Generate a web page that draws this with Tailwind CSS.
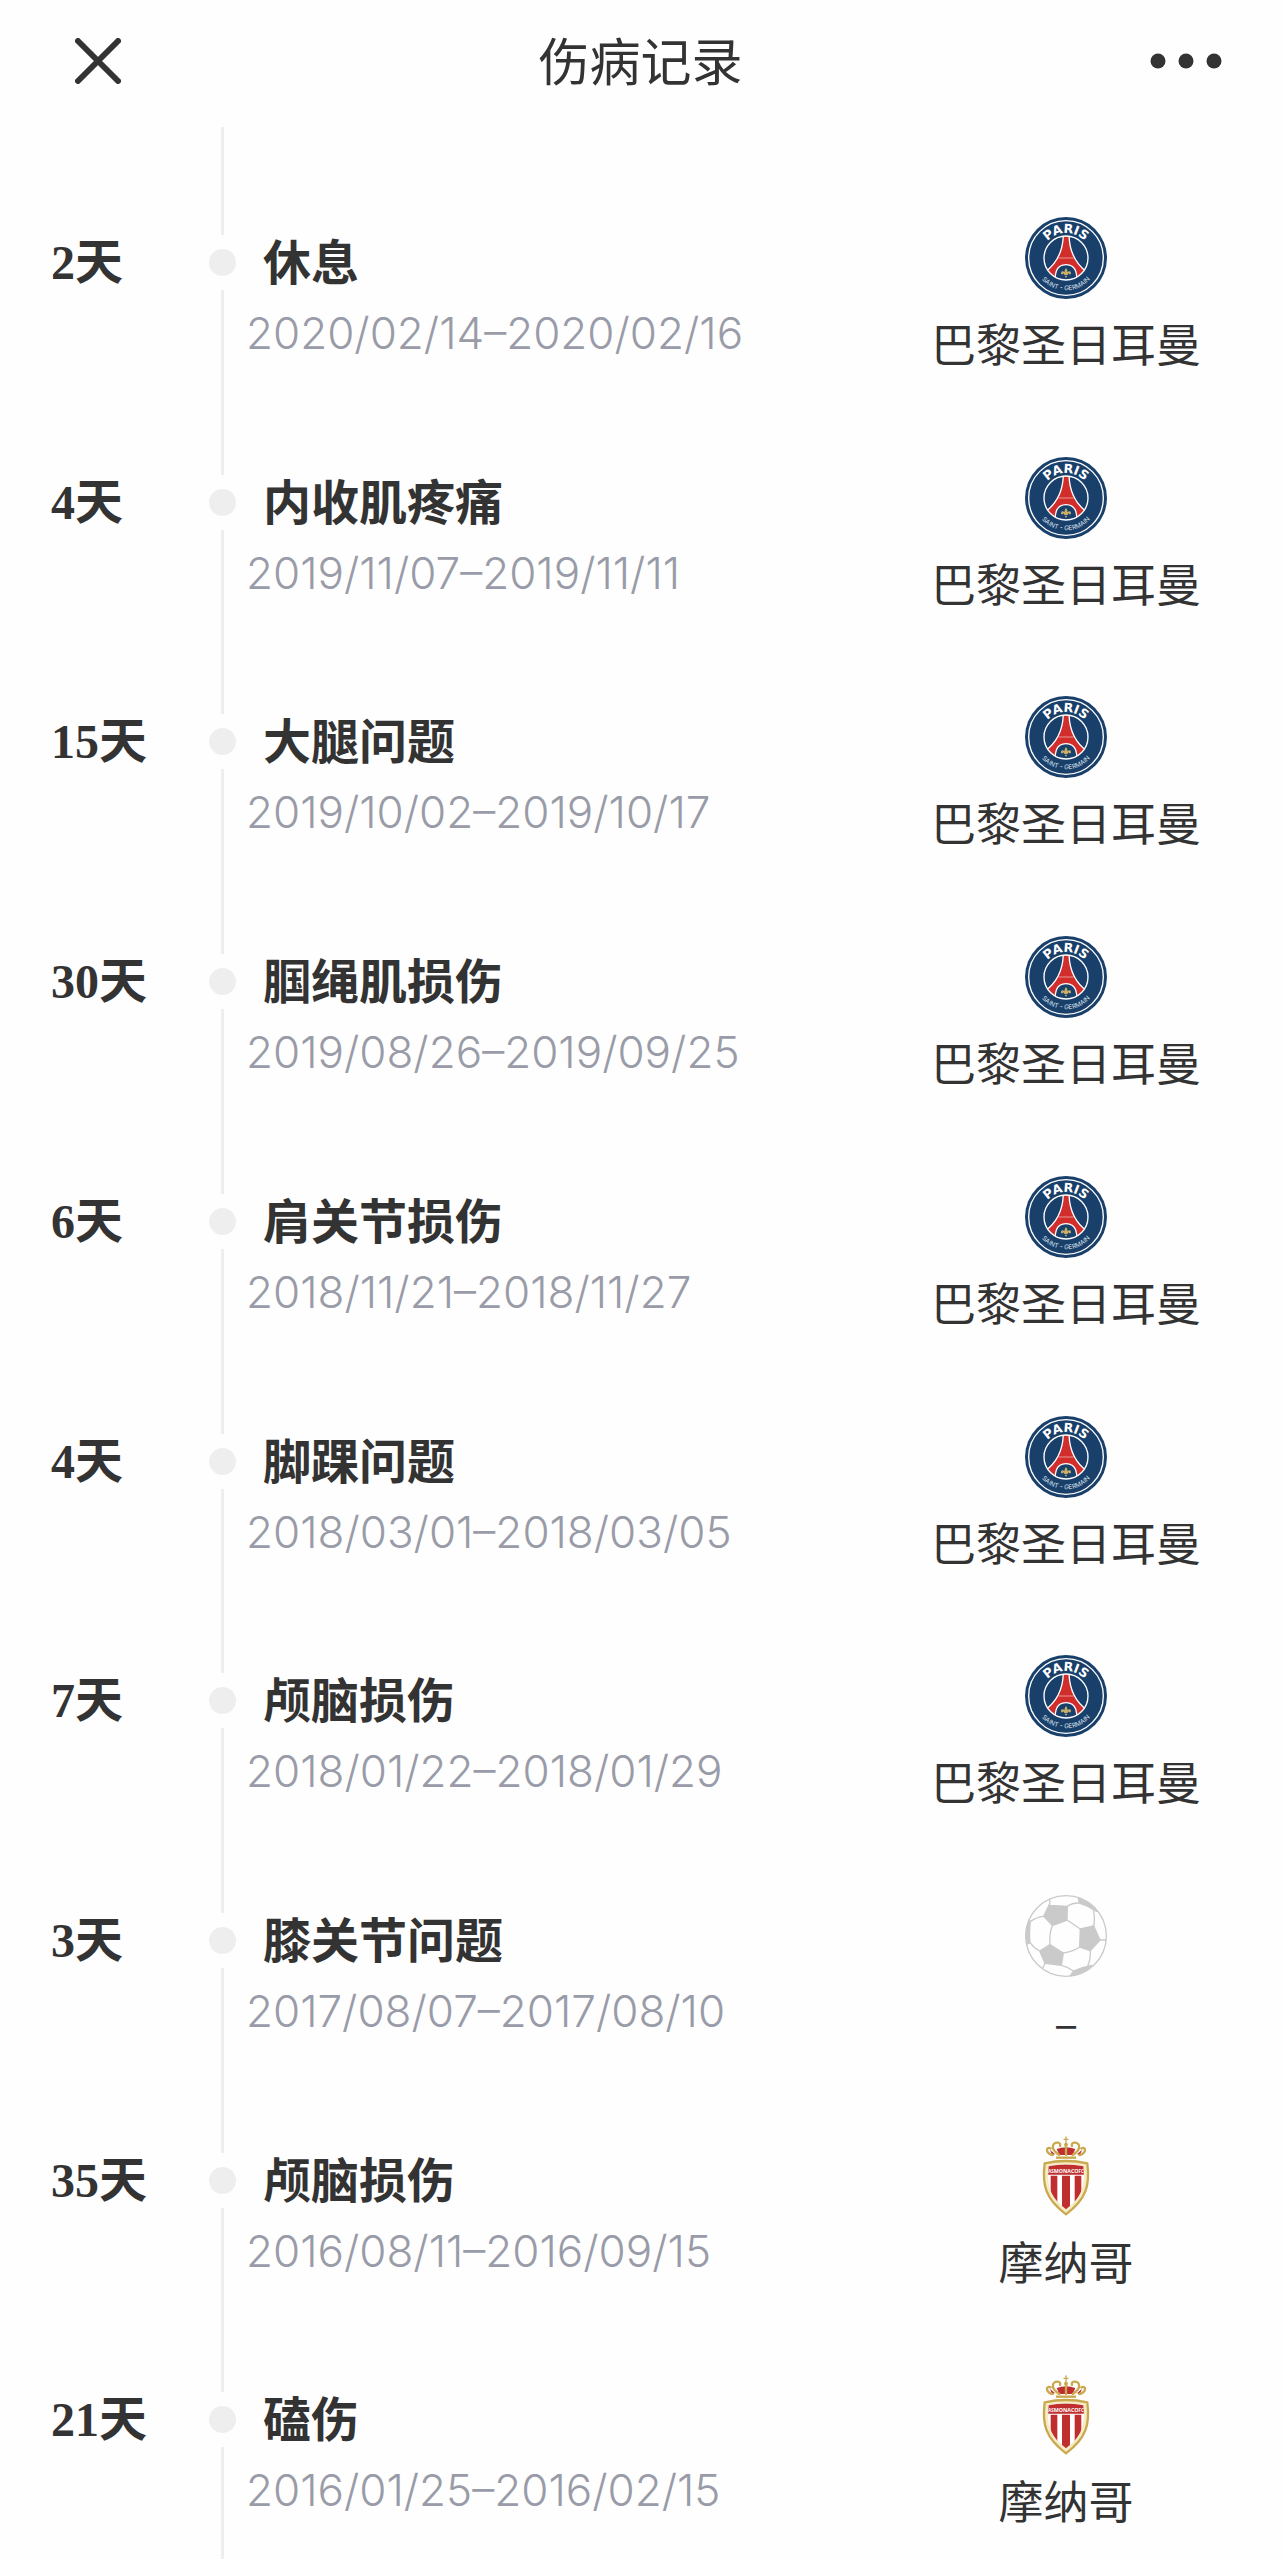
<!DOCTYPE html>
<html lang="zh-CN">
  <head>
    <meta charset="UTF-8" />
    <title>伤病记录</title>
    <meta name="viewport" content="width=device-width, initial-scale=1.0" />
    <script src="https://cdn.jsdelivr.net/npm/@tailwindcss/browser@4"></script>
  </head>
  <body class="flex min-h-screen flex-col bg-[#fefefe] font-['Noto_Sans_CJK_SC',sans-serif] text-[#333333]">
    <header class="flex h-[121px] items-center justify-between pr-[61px] pl-[75px]">
      <button type="button" aria-label="关闭" class="w-14">
        <svg class="size-[46px]" viewBox="0 0 46 46" fill="none" stroke="#333" stroke-width="6" stroke-linecap="round">
          <path d="M3 3 L43 43 M43 3 L3 43" />
        </svg>
      </button>
      <h1 class="pb-1 text-[51px] leading-[64px]">伤病记录</h1>
      <button type="button" aria-label="更多">
        <svg class="h-4 w-[72px]" viewBox="0 0 72 16" fill="#333">
          <circle cx="8" cy="8" r="7.5" />
          <circle cx="36" cy="8" r="7.5" />
          <circle cx="64" cy="8" r="7.5" />
        </svg>
      </button>
    </header>

    <main class="flex grow flex-col pt-1.5">
      <ol id="records" class="flex grow flex-col"></ol>
      <!-- rail runs on under the last record -->
      <div class="ml-[221px] h-[35px] w-[3px] bg-[#eeeeee]"></div>
    </main>

    <script>
      const badges = {
        psg: `
          <svg class="size-[82px]" viewBox="45 36 246 246" aria-hidden="true">
            <circle cx="168" cy="159" r="123" fill="#193f6b" />
            <circle cx="168" cy="159" r="112" fill="none" stroke="#fff" stroke-width="4" />
            <clipPath id="psg-disc"><circle cx="168" cy="159" r="65" /></clipPath>
            <g clip-path="url(#psg-disc)">
              <path d="M160 90 C159 130 146 172 104 202 L136 232 H200 L232 202 C190 172 178 130 177 90 Z" fill="#d12d2a" stroke="#fff" stroke-width="4" />
              <path d="M146 159 H191" stroke="#f3c9c8" stroke-width="2" />
              <path d="M136 234 C136 222 130 179 168 179 C206 179 200 222 200 234 Z" fill="#193f6b" stroke="#fff" stroke-width="4" />
            </g>
            <circle cx="168" cy="159" r="66" fill="none" stroke="#fff" stroke-width="4" />
            <path d="M168 189 C162 196 163 202 166 206 C164 198 153 196 153 204 C153 209 158 210 159 206 C161 205 163 208 163 210 H173 C173 208 175 205 177 206 C178 210 183 209 183 204 C183 196 172 198 170 206 C173 202 174 196 168 189 Z M164 212 H172 L168 219 Z" fill="#c9b06a" />
            <path id="psg-top" d="M93 159 A75 75 0 0 1 243 159" fill="none" />
            <path id="psg-bottom" d="M71 159 A97 97 0 0 0 265 159" fill="none" />
            <text font-family="DejaVu Sans" font-weight="700" font-size="38" fill="#fff" text-anchor="middle">
              <textPath href="#psg-top" startOffset="50%">PARIS</textPath>
            </text>
            <text font-family="Inter" font-size="19" fill="#dfe6ee" text-anchor="middle">
              <textPath href="#psg-bottom" startOffset="50%">SAINT - GERMAIN</textPath>
            </text>
          </svg>`,
        // placeholder when the club is unknown
        ball: `
          <svg class="size-[82px]" viewBox="45 42 246 246" aria-hidden="true">
            <clipPath id="ball-disc"><circle cx="168" cy="165" r="122" /></clipPath>
            <g clip-path="url(#ball-disc)" fill="#cacaca" stroke="#cacaca" stroke-width="4" stroke-linejoin="round">
              <path d="M117 73 L172 76 L171 117 L127 133 L101 106 Z" />
              <path d="M211 144 L251 135 L270 177 L241 209 L209 198 Z" />
              <path d="M89 210 L120 191 L160 216 L154 253 L105 247 Z" />
              <path d="M40 120 H61 Q57 155 60 185 L50 190 H40 Z" />
              <path d="M203 40 L208 66 Q235 74 260 91 L250 60 Z" />
              <path d="M245 253 Q215 259 190 270 L176 292 L220 285 Z" />
              <g fill="none">
                <path d="M127 133 L171 117 L211 144 M127 133 Q117 160 120 191 M160 216 Q188 212 209 198" />
                <path d="M172 76 Q188 65 208 66 M251 135 Q256 112 250 88 M270 177 H291 M241 209 Q242 235 233 255" />
                <path d="M154 253 Q172 257 190 270 M89 210 Q72 202 60 185 M61 122 Q78 108 101 106" />
                <path d="M117 73 Q122 66 118 50 M105 247 L98 262" />
              </g>
            </g>
            <circle cx="168" cy="165" r="121" fill="none" stroke="#cacaca" stroke-width="4" />
          </svg>`,
        monaco: `
          <svg class="size-[82px]" viewBox="45 28 246 246" aria-hidden="true">
            <path d="M148 88 L140 70 Q168 60 196 70 L188 88 Z M126 88 L120 72 L135 86 Z M210 88 L216 72 L201 86 Z" fill="#bf2f30" />
            <g fill="none" stroke="#c9a94e" stroke-width="7" stroke-linecap="round">
              <path d="M128 88 C108 84 105 62 122 68" />
              <path d="M208 88 C228 84 231 62 214 68" />
              <path d="M148 88 C118 70 128 48 144 51 Q153 53 150 61" />
              <path d="M188 88 C218 70 208 48 192 51 Q183 53 186 61" />
              <path d="M168 64 V88" />
              <path d="M168 34 V54 M162 41 H174" stroke-width="4" />
            </g>
            <circle cx="168" cy="57" r="6" fill="#c9a94e" />
            <path d="M138 96 H198" stroke="#c9a94e" stroke-width="7" />
            <path d="M104 113 Q168 99 232 113 C240 178 230 220 168 266 C106 220 96 178 104 113 Z" fill="#f5ebc4" stroke="#c9a94e" stroke-width="7" stroke-linejoin="round" />
            <clipPath id="monaco-shield"><path d="M116 122 Q168 111 220 122 C225 176 220 212 168 251 C116 212 111 176 116 122 Z" /></clipPath>
            <g clip-path="url(#monaco-shield)">
              <path d="M100 100 H236 V260 H100 Z" fill="#fff" />
              <path d="M100 100 H236 V147 H100 Z M122 150 H142 V260 H122 Z M156 150 H180 V260 H156 Z M194 150 H214 V260 H194 Z" fill="#bf2f30" />
            </g>
            <text x="168" y="142" font-family="Open Sans" font-weight="700" fill="#fff" text-anchor="middle"><tspan font-size="13">AS</tspan><tspan font-size="16">MONACO</tspan><tspan font-size="13">FC</tspan></text>
          </svg>`,
      };

      const records = [
        { days: 2, injury: "休息", dates: "2020/02/14–2020/02/16", badge: "psg", club: "巴黎圣日耳曼" },
        { days: 4, injury: "内收肌疼痛", dates: "2019/11/07–2019/11/11", badge: "psg", club: "巴黎圣日耳曼" },
        { days: 15, injury: "大腿问题", dates: "2019/10/02–2019/10/17", badge: "psg", club: "巴黎圣日耳曼" },
        { days: 30, injury: "腘绳肌损伤", dates: "2019/08/26–2019/09/25", badge: "psg", club: "巴黎圣日耳曼" },
        { days: 6, injury: "肩关节损伤", dates: "2018/11/21–2018/11/27", badge: "psg", club: "巴黎圣日耳曼" },
        { days: 4, injury: "脚踝问题", dates: "2018/03/01–2018/03/05", badge: "psg", club: "巴黎圣日耳曼" },
        { days: 7, injury: "颅脑损伤", dates: "2018/01/22–2018/01/29", badge: "psg", club: "巴黎圣日耳曼" },
        { days: 3, injury: "膝关节问题", dates: "2017/08/07–2017/08/10", badge: "ball", club: "–" },
        { days: 35, injury: "颅脑损伤", dates: "2016/08/11–2016/09/15", badge: "monaco", club: "摩纳哥" },
        { days: 21, injury: "磕伤", dates: "2016/01/25–2016/02/15", badge: "monaco", club: "摩纳哥" },
      ];

      document.getElementById("records").innerHTML = records.map((r) => `
        <li class="flex flex-1">
          <p class="w-[209px] pt-[104px] pl-[51px] font-['Liberation_Serif','Noto_Sans_CJK_SC',serif] text-[48px] leading-[64px] font-bold">${r.days}天</p>
          <div class="flex w-[27px] flex-col items-center">
            <span class="h-[108px] w-[3px] bg-[#eeeeee]"></span>
            <span class="my-[14px] size-[27px] rounded-full bg-[#eeeeee]"></span>
            <span class="w-[3px] grow bg-[#eeeeee]"></span>
          </div>
          <div class="grow pt-[100px]">
            <h2 class="pl-[27px] text-[48px] leading-[64px] font-bold">${r.injury}</h2>
            <p class="pt-3 pl-[10px] font-['Inter',sans-serif] text-[44px] leading-[60px] font-light text-[#999ca8]">${r.dates}</p>
          </div>
          <div class="flex w-[434px] flex-col items-center pt-[90px]">
            ${badges[r.badge]}
            <p class="pt-6 text-[45px] leading-[40px]">${r.club}</p>
          </div>
        </li>`).join("");
    </script>
  </body>
</html>
